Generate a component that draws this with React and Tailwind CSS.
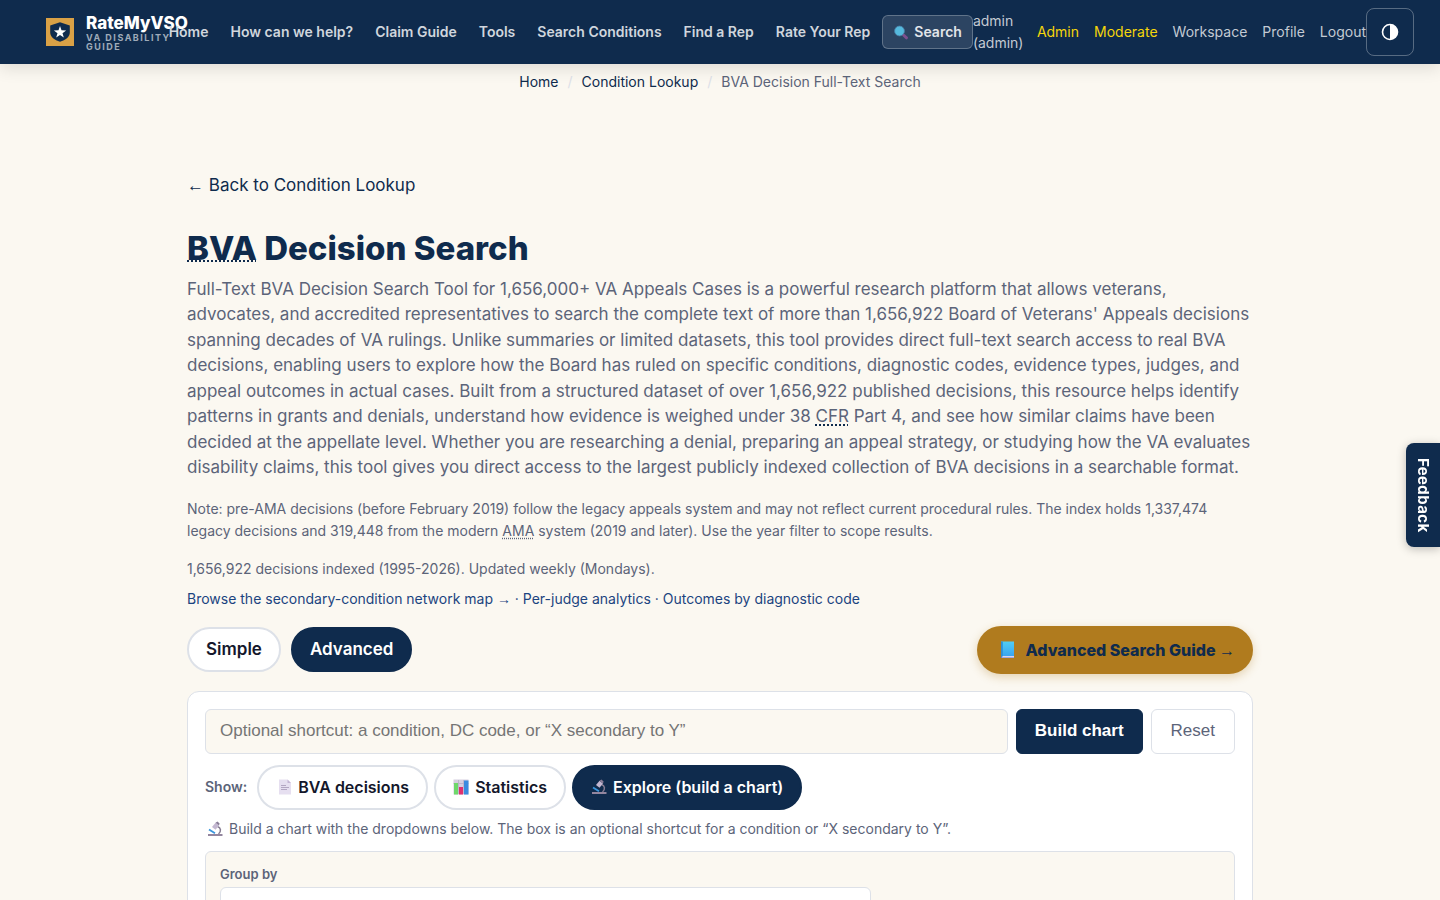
import { useState } from 'react';

const NAV_LINKS = ['Home', 'How can we help?', 'Claim Guide', 'Tools', 'Search Conditions', 'Find a Rep', 'Rate Your Rep'];

function BrandMark() {
  return (
    <svg viewBox="0 0 28 28" className="h-7 w-7 shrink-0" aria-hidden="true">
      <rect width="28" height="28" fill="#d9a146" />
      <path d="M14 4.2 L23.8 7.6 V14.5 C23.8 19 19.5 22 14 23.8 C8.5 22 4.2 19 4.2 14.5 V7.6 Z" fill="#0f2b4d" />
      <path d="M14 8 L15.5 12.3 L20.1 12.4 L16.5 15.2 L17.8 19.6 L14 17 L10.2 19.6 L11.5 15.2 L7.9 12.4 L12.5 12.3 Z" fill="#fff" />
    </svg>
  );
}

function MagnifierIcon() {
  return (
    <svg viewBox="0 0 16 16" className="h-4 w-4 shrink-0" aria-hidden="true">
      <path d="M10.5 11 L13.5 13.8" stroke="#7d4f8f" strokeWidth="3" strokeLinecap="round" />
      <circle cx="6.5" cy="7" r="4.9" fill="#55b9dd" stroke="#4a7fa6" strokeWidth="0.8" />
    </svg>
  );
}

function BookIcon() {
  return (
    <svg viewBox="0 0 16 18" className="h-[18px] w-4 shrink-0" aria-hidden="true">
      <defs>
        <linearGradient id="book" x1="0" y1="0" x2="0" y2="1">
          <stop offset="0" stopColor="#50cdf3" />
          <stop offset="1" stopColor="#3aa5f0" />
        </linearGradient>
      </defs>
      <rect x="2" y="1" width="13" height="16" fill="#6b7fd0" />
      <rect x="3" y="15" width="12" height="1.5" fill="#d8d5f0" />
      <rect x="2" y="0.5" width="13" height="14.5" fill="url(#book)" />
      <rect x="2" y="0.5" width="1.8" height="15" fill="#2c8fd6" />
    </svg>
  );
}

function PageIcon() {
  return (
    <svg viewBox="0 0 16 16" className="h-4 w-4 shrink-0" aria-hidden="true">
      <path d="M3 0.5 H11.5 L15 4 V15.5 H3 Z" fill="#e6dff0" />
      <path d="M11.5 0.5 L15 4 H11.5 Z" fill="#c3b5d3" />
      <path d="M5 6.5 H10 M5 8.5 H13 M5 10.5 H11" stroke="#b3a6c2" strokeWidth="1.1" />
    </svg>
  );
}

function ChartIcon() {
  return (
    <svg viewBox="0 0 16 16" className="h-4 w-4 shrink-0" aria-hidden="true">
      <rect x="0.5" y="0.5" width="15" height="15" fill="#d6cfe0" />
      <path d="M0.5 4.5 H15.5 M5.5 1 V15 M10.5 1 V15" stroke="#b9afc8" strokeWidth="0.8" />
      <rect x="1" y="4" width="4" height="11.5" fill="#6fd86b" />
      <rect x="6" y="8" width="4" height="7.5" fill="#e0306f" />
      <rect x="11" y="1.5" width="4.5" height="14" fill="#3b8be0" />
    </svg>
  );
}

function MicroscopeIcon() {
  return (
    <svg viewBox="0 0 16 16" className="h-4 w-4 shrink-0" aria-hidden="true">
      <path d="M10.5 5.5 C14 6.5 14.5 10.5 11.5 13" fill="none" stroke="#857b91" strokeWidth="1.5" />
      <path d="M8.5 1.8 L12 4.5 L8.5 8.8 L5 6 Z" fill="#c3b7d1" />
      <path d="M8.5 1.8 L10.5 0.6 L12.6 2.5 L12 4.5 Z" fill="#897d98" />
      <path d="M2 8.5 L8 12.2" stroke="#3b96dd" strokeWidth="1.8" />
      <path d="M1 13 H15.5 V15 H1 Z" fill="#93869f" />
    </svg>
  );
}

function ContrastIcon() {
  return (
    <svg viewBox="0 0 18 18" className="h-[18px] w-[18px]" aria-hidden="true">
      <circle cx="9" cy="9" r="7.5" fill="none" stroke="#fff" strokeWidth="1.6" />
      <path d="M9 1.5 A7.5 7.5 0 0 1 9 16.5 Z" fill="#fff" />
    </svg>
  );
}

function SiteHeader() {
  return (
    <header className="relative z-10 flex h-16 items-center bg-[#0f2b4d] pr-[26px] pl-[46px] shadow-[0_4px_16px_rgba(0,0,0,0.12)]">
      <a href="#" className="flex min-w-0 flex-1 items-center gap-3">
        <BrandMark />
        <span className="block w-0 flex-1 whitespace-nowrap">
          <span className="block text-[17px] leading-5 font-extrabold text-white">RateMyVSO</span>
          <span className="block text-[9px] leading-[9px] font-bold tracking-[1.5px] text-[#9fabb9]">
            VA DISABILITY
            <br />
            GUIDE
          </span>
        </span>
      </a>
      <nav className="flex shrink-0 items-center text-sm font-semibold whitespace-nowrap text-[#d0d6dd]">
        <div className="flex gap-[22px] pr-3">
          {NAV_LINKS.map((label) => (
            <a key={label} href="#">{label}</a>
          ))}
        </div>
        <button type="button" className="flex h-[34px] items-center gap-[5px] rounded-md border border-white/25 bg-white/12 px-2.5 text-[#e2e6ea]">
          <MagnifierIcon />
          Search
        </button>
      </nav>
      <div className="flex shrink-0 items-center gap-[15px] text-sm text-[#c3cad3]">
        <span className="w-[49px] leading-[22px]">admin (admin)</span>
        <a href="#" className="text-[#f5d60a]">Admin</a>
        <a href="#" className="text-[#f5d60a]">Moderate</a>
        <a href="#">Workspace</a>
        <a href="#">Profile</a>
        <a href="#">Logout</a>
      </div>
      <button type="button" aria-label="Toggle contrast" className="flex h-12 w-12 shrink-0 items-center justify-center rounded-lg border border-white/30">
        <ContrastIcon />
      </button>
    </header>
  );
}

function Pill({ active, icon, children, onClick }) {
  return (
    <button
      type="button"
      aria-pressed={active}
      onClick={onClick}
      className={`flex h-[45px] items-center gap-1.5 rounded-full border-2 px-[17px] font-semibold ${
        active ? 'border-[#0f2b4d] bg-[#0f2b4d] text-white' : 'border-[#dde1e8] bg-white text-[#14172b]'
      }`}
    >
      {icon}
      {children}
    </button>
  );
}

function Arrow({ children }) {
  return <span className="font-['Liberation_Sans',sans-serif] leading-none font-normal">{children}</span>;
}

function SearchPanel() {
  const [show, setShow] = useState('explore');

  return (
    <section className="mt-[17px] rounded-xl border border-[#dde1e8] bg-white p-[17px]">
      <form className="flex gap-2" onSubmit={(e) => e.preventDefault()}>
        <input
          type="text"
          aria-label="Search shortcut"
          placeholder="Optional shortcut: a condition, DC code, or “X secondary to Y”"
          className="h-[45px] min-w-0 flex-1 rounded-md border border-[#dde1e8] bg-[#fbf8f1] px-3.5 font-['Liberation_Sans',sans-serif] text-[17px] placeholder:text-[#757575]"
        />
        <button type="submit" className="h-[45px] rounded-md border border-[#0f2b4d] bg-[#0f2b4d] px-[18px] font-['Liberation_Sans',sans-serif] text-[17px] font-bold text-white">Build chart</button>
        <button type="reset" className="h-[45px] rounded-md border border-[#dde1e8] bg-white px-[19px] font-['Liberation_Sans',sans-serif] text-[17px] text-[#5c6479]">Reset</button>
      </form>

      <div className="mt-[11px] flex items-center gap-1.5 text-base">
        <span className="mr-1 text-sm font-semibold text-[#5c6479]">Show:</span>
        <Pill active={show === 'decisions'} icon={<PageIcon />} onClick={() => setShow('decisions')}>BVA decisions</Pill>
        <Pill active={show === 'stats'} icon={<ChartIcon />} onClick={() => setShow('stats')}>Statistics</Pill>
        <Pill active={show === 'explore'} icon={<MicroscopeIcon />} onClick={() => setShow('explore')}>Explore (build a chart)</Pill>
      </div>

      <p className="mt-2 flex items-center gap-1.5 pl-0.5 text-sm leading-[22px] text-[#5c6479]">
        <MicroscopeIcon />
        Build a chart with the dropdowns below. The box is an optional shortcut for a condition or “X secondary to Y”.
      </p>

      <div className="mt-[11px] rounded-md border border-[#dde1e8] bg-[#fbf8f1] p-3.5">
        <label htmlFor="group-by" className="block text-[13px] leading-4 font-semibold text-[#5c6479]">Group by</label>
        <select id="group-by" className="mt-[5px] h-[45px] w-full max-w-[651px] appearance-none rounded-md border border-[#dde1e8] bg-white px-3" />
      </div>
    </section>
  );
}

export default function App() {
  const [mode, setMode] = useState('advanced');

  return (
    <div className="h-screen overflow-hidden bg-[#fbf8f1] font-[Inter,sans-serif] text-[17px] leading-normal text-[#0f2b4d]">
      <SiteHeader />

      <nav aria-label="Breadcrumb" className="flex justify-center gap-[9px] pt-2 text-sm leading-5">
        <a href="#">Home</a>
        <span className="text-[#dde1e8]">/</span>
        <a href="#">Condition Lookup</a>
        <span className="text-[#dde1e8]">/</span>
        <span className="text-[#5c6479]">BVA Decision Full-Text Search</span>
      </nav>

      <main className="mx-auto max-w-[1066px] pt-[81px]">
        <a href="#" className="block"><Arrow>←</Arrow> Back to Condition Lookup</a>

        <h1 className="mt-7 text-[33px] leading-[42px] font-extrabold">
          <abbr className="underline decoration-dotted decoration-2">BVA</abbr> Decision Search
        </h1>

        <p className="mt-2 text-[#5c6479]">
          Full-Text BVA Decision Search Tool for 1,656,000+ VA Appeals Cases is a powerful research platform that allows
          veterans, advocates, and accredited representatives to search the complete text of more than 1,656,922 Board of
          Veterans' Appeals decisions spanning decades of VA rulings. Unlike summaries or limited datasets, this tool
          provides direct full-text search access to real BVA decisions, enabling users to explore how the Board has ruled
          on specific conditions, diagnostic codes, evidence types, judges, and appeal outcomes in actual cases. Built from
          a structured dataset of over 1,656,922 published decisions, this resource helps identify patterns in grants and
          denials, understand how evidence is weighed under 38{' '}
          <abbr className="underline decoration-[#0f2b4d] decoration-dotted decoration-2 underline-offset-2">CFR</abbr> Part 4, and see how similar
          claims have been decided at the appellate level. Whether you are researching a denial, preparing an appeal
          strategy, or studying how the VA evaluates disability claims, this tool gives you direct access to the largest
          publicly indexed collection of BVA decisions in a searchable format.
        </p>

        <p className="mt-[17px] text-sm leading-[22px] text-[#5c6479]">
          Note: pre-AMA decisions (before February 2019) follow the legacy appeals system and may not reflect current
          procedural rules. The index holds 1,337,474 legacy decisions and 319,448 from the modern{' '}
          <abbr className="underline decoration-dotted underline-offset-2">AMA</abbr> system (2019 and later). Use the
          year filter to scope results.
        </p>

        <p className="mt-4 text-sm leading-[22px] text-[#5c6479]">1,656,922 decisions indexed (1995-2026). Updated weekly (Mondays).</p>

        <p className="mt-2 text-sm leading-[22px] text-[#1b4480]">
          <a href="#">Browse the secondary-condition network map <Arrow>→</Arrow></a> · <a href="#">Per-judge analytics</a> ·{' '}
          <a href="#">Outcomes by diagnostic code</a>
        </p>

        <div className="mt-4 flex items-center justify-between">
          <div className="flex gap-2.5">
            <Pill active={mode === 'simple'} onClick={() => setMode('simple')}>Simple</Pill>
            <Pill active={mode === 'advanced'} onClick={() => setMode('advanced')}>Advanced</Pill>
          </div>
          <a href="#" className="flex h-12 items-center gap-2.5 rounded-full bg-[#b07b1e] pr-[18px] pl-[22px] text-base font-extrabold shadow-[0_3px_10px_rgba(176,123,30,0.3)]">
            <BookIcon />
            <span>Advanced Search Guide <Arrow>→</Arrow></span>
          </a>
        </div>

        <SearchPanel />
      </main>

      <button
        type="button"
        className="fixed top-[443px] right-0 flex h-[104px] w-[34px] items-center justify-center rounded-l-lg bg-[#0f2b4d] text-[15px] font-bold tracking-wide text-white shadow-[0_2px_10px_rgba(0,0,0,0.25)] [writing-mode:vertical-rl]"
      >
        Feedback
      </button>
    </div>
  );
}
